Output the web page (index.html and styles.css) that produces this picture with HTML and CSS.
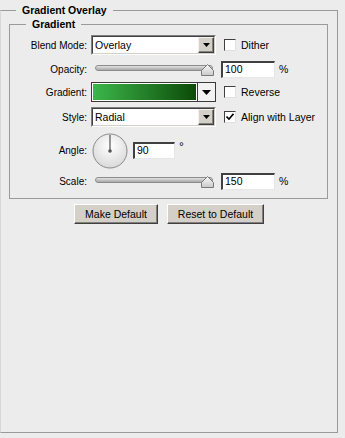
FILE: index.html
```html
<!DOCTYPE html>
<html lang="en">
<head>
    <meta charset="UTF-8">
    <title>Gradient Overlay</title>
    <link rel="stylesheet" href="styles.css">
</head>
<body>

<fieldset class="panel">
    <legend class="panel-title">Gradient Overlay</legend>

    <fieldset class="group">
        <legend class="group-title">Gradient</legend>

        <div class="row r1">
            <label class="lbl">Blend Mode:</label>
            <div class="select">
                <div class="select-in">
                    <span class="val">Overlay</span>
                    <span class="drop"><svg width="7" height="4" viewBox="0 0 7 4"><path d="M0 0H7L3.5 4Z" fill="#000"/></svg></span>
                </div>
            </div>
            <span class="check"></span>
            <span class="check-lbl">Dither</span>
        </div>

        <div class="row r2">
            <label class="lbl">Opacity:</label>
            <div class="slider">
                <div class="track"></div>
                <svg class="thumb" width="13" height="12" viewBox="0 0 13 12"><defs><linearGradient id="tg" x1="0" y1="0" x2="0" y2="1"><stop offset="0" stop-color="#fbfbfb"/><stop offset="1" stop-color="#c8c8c8"/></linearGradient></defs><path d="M0.5 11.5V6.5L6.5 0.5L12.5 6.5V11.5Z" fill="url(#tg)" stroke="#7a7a7a"/></svg>
            </div>
            <div class="field w53">100</div>
            <span class="unit">%</span>
        </div>

        <div class="row r3">
            <label class="lbl">Gradient:</label>
            <div class="grad">
                <span class="grad-fill"></span>
                <span class="grad-drop"><svg width="9" height="5" viewBox="0 0 9 5"><path d="M0 0H9L4.5 5Z" fill="#000"/></svg></span>
            </div>
            <span class="check"></span>
            <span class="check-lbl">Reverse</span>
        </div>

        <div class="row r4">
            <label class="lbl">Style:</label>
            <div class="select">
                <div class="select-in">
                    <span class="val">Radial</span>
                    <span class="drop"><svg width="7" height="4" viewBox="0 0 7 4"><path d="M0 0H7L3.5 4Z" fill="#000"/></svg></span>
                </div>
            </div>
            <span class="check"><svg width="8" height="8" viewBox="0 0 8 8"><path d="M0.5 3.5L3 6L7.5 0.8" fill="none" stroke="#000" stroke-width="1.6"/></svg></span>
            <span class="check-lbl">Align with Layer</span>
        </div>

        <div class="row r5">
            <label class="lbl">Angle:</label>
            <svg class="dial" width="36" height="36" viewBox="0 0 36 36">
                <defs><radialGradient id="dg" cx="0.5" cy="0.35" r="0.6"><stop offset="0" stop-color="#ffffff"/><stop offset="1" stop-color="#dcdcdc"/></radialGradient></defs>
                <circle cx="18" cy="18" r="17" fill="url(#dg)" stroke="#8a8a8a"/>
                <line x1="18" y1="18" x2="18" y2="2" stroke="#6a6a6a" stroke-width="1.4"/>
                <circle cx="18" cy="18" r="1.8" fill="#555"/>
            </svg>
            <div class="field w41">90</div>
            <span class="deg">°</span>
        </div>

        <div class="row r6">
            <label class="lbl">Scale:</label>
            <div class="slider">
                <div class="track"></div>
                <svg class="thumb" width="13" height="12" viewBox="0 0 13 12"><path d="M0.5 11.5V6.5L6.5 0.5L12.5 6.5V11.5Z" fill="url(#tg)" stroke="#7a7a7a"/></svg>
            </div>
            <div class="field w53">150</div>
            <span class="unit">%</span>
        </div>
    </fieldset>

    <div class="buttons">
        <button class="btn make">Make Default</button>
        <button class="btn reset">Reset to Default</button>
    </div>
</fieldset>

</body>
</html>
```

FILE: styles.css
```css
body {
    margin: 0;
    background-color: #ececec;
    font-family: "Liberation Sans", Arial, sans-serif;
    font-size: 10px;
    color: #000;
}

.panel {
    box-sizing: border-box;
    width: 338px;
    height: 430px;
    margin: 3px 0 0 0;
    padding: 0;
    border: 1px solid #9a9a9a;
    border-left-color: #d8d8d8;
}

.panel-title,
.group-title {
    font-weight: bold;
    font-size: 10.5px;
    line-height: 14px;
    padding: 0 6px;
}

.panel-title {
    margin-left: 15px;
}

.group {
    box-sizing: border-box;
    width: 319px;
    height: 182px;
    margin: 0 0 0 8px;
    padding: 4px 0 0 0;
    border: 1px solid #9a9a9a;
}

.group-title {
    margin-left: 16px;
}

.row {
    display: flex;
    align-items: center;
    height: 20px;
}

.r2 { margin-top: 4px; }
.r3 { margin-top: 3px; }
.r4 { margin-top: 5px; }
.r5 { margin-top: 6px; height: 35px; }
.r6 { margin-top: 3px; }

.lbl {
    width: 77px;
    margin-right: 4px;
    text-align: right;
}

.select {
    box-sizing: border-box;
    width: 125px;
    height: 20px;
    border: 1px solid;
    border-color: #808080 #ffffff #ffffff #808080;
}

.select-in {
    box-sizing: border-box;
    height: 100%;
    display: flex;
    background-color: #fff;
    border: 1px solid;
    border-color: #404040 #d4d0c8 #d4d0c8 #404040;
}

.val {
    flex: 1;
    padding-left: 2px;
    line-height: 16px;
    font-size: 10.5px;
}

.drop {
    box-sizing: border-box;
    width: 16px;
    display: flex;
    align-items: center;
    justify-content: center;
    background-color: #d4d0c8;
    border: 1px solid;
    border-color: #f4f2ee #404040 #404040 #f4f2ee;
    box-shadow: inset -1px -1px 0 #808080;
}

.check {
    box-sizing: border-box;
    width: 12px;
    height: 12px;
    margin-left: 8px;
    background-color: #fff;
    border: 1px solid;
    border-color: #404040 #e0e0e0 #e0e0e0 #404040;
    display: flex;
    align-items: center;
    justify-content: center;
}

.check-lbl {
    margin-left: 5px;
    font-size: 10.5px;
}

.slider {
    position: relative;
    width: 125px;
    height: 20px;
}

.track {
    position: absolute;
    left: 4px;
    top: 6px;
    width: 116px;
    height: 4px;
    border: 1px solid #8c8c8c;
    border-radius: 3px;
    background: linear-gradient(#e2e2e2, #a8a8a8);
}

.thumb {
    position: absolute;
    left: 110px;
    top: 5px;
}

.field {
    box-sizing: border-box;
    height: 17px;
    margin-left: 5px;
    padding-left: 2px;
    line-height: 13px;
    font-size: 10.5px;
    background-color: #fff;
    border: 1px solid;
    border-top: 2px solid #404040;
    border-left: 2px solid #404040;
    border-right-color: #e6e6e6;
    border-bottom-color: #e6e6e6;
}

.w53 { width: 54px; }
.w41 { width: 42px; }

.unit {
    margin-left: 4px;
    font-size: 10.5px;
}

.deg {
    align-self: flex-start;
    margin: 8px 0 0 4px;
    font-size: 12px;
    line-height: 12px;
}

.grad {
    box-sizing: border-box;
    width: 125px;
    height: 20px;
    display: flex;
    border: 1px solid #3a3a3a;
    background-color: #fff;
}

.grad-fill {
    flex: 1;
    margin: 1px;
    background: linear-gradient(to right, #3cb64b, #0c4b08);
}

.grad-drop {
    width: 17px;
    display: flex;
    align-items: center;
    justify-content: center;
    border-left: 1px solid #3a3a3a;
    background-color: #f2f2f2;
}

.dial {
    margin-left: 1px;
}

.buttons {
    display: flex;
    justify-content: center;
    gap: 9px;
    margin-top: 5px;
}

.btn {
    box-sizing: border-box;
    height: 20px;
    padding: 0;
    font-family: "Liberation Sans", Arial, sans-serif;
    font-size: 10.5px;
    color: #000;
    background-color: #d4d0c8;
    border: 1px solid;
    border-color: #ffffff #404040 #404040 #ffffff;
    box-shadow: inset -1px -1px 0 #808080;
}

.make { width: 84px; }
.reset { width: 97px; }
```
